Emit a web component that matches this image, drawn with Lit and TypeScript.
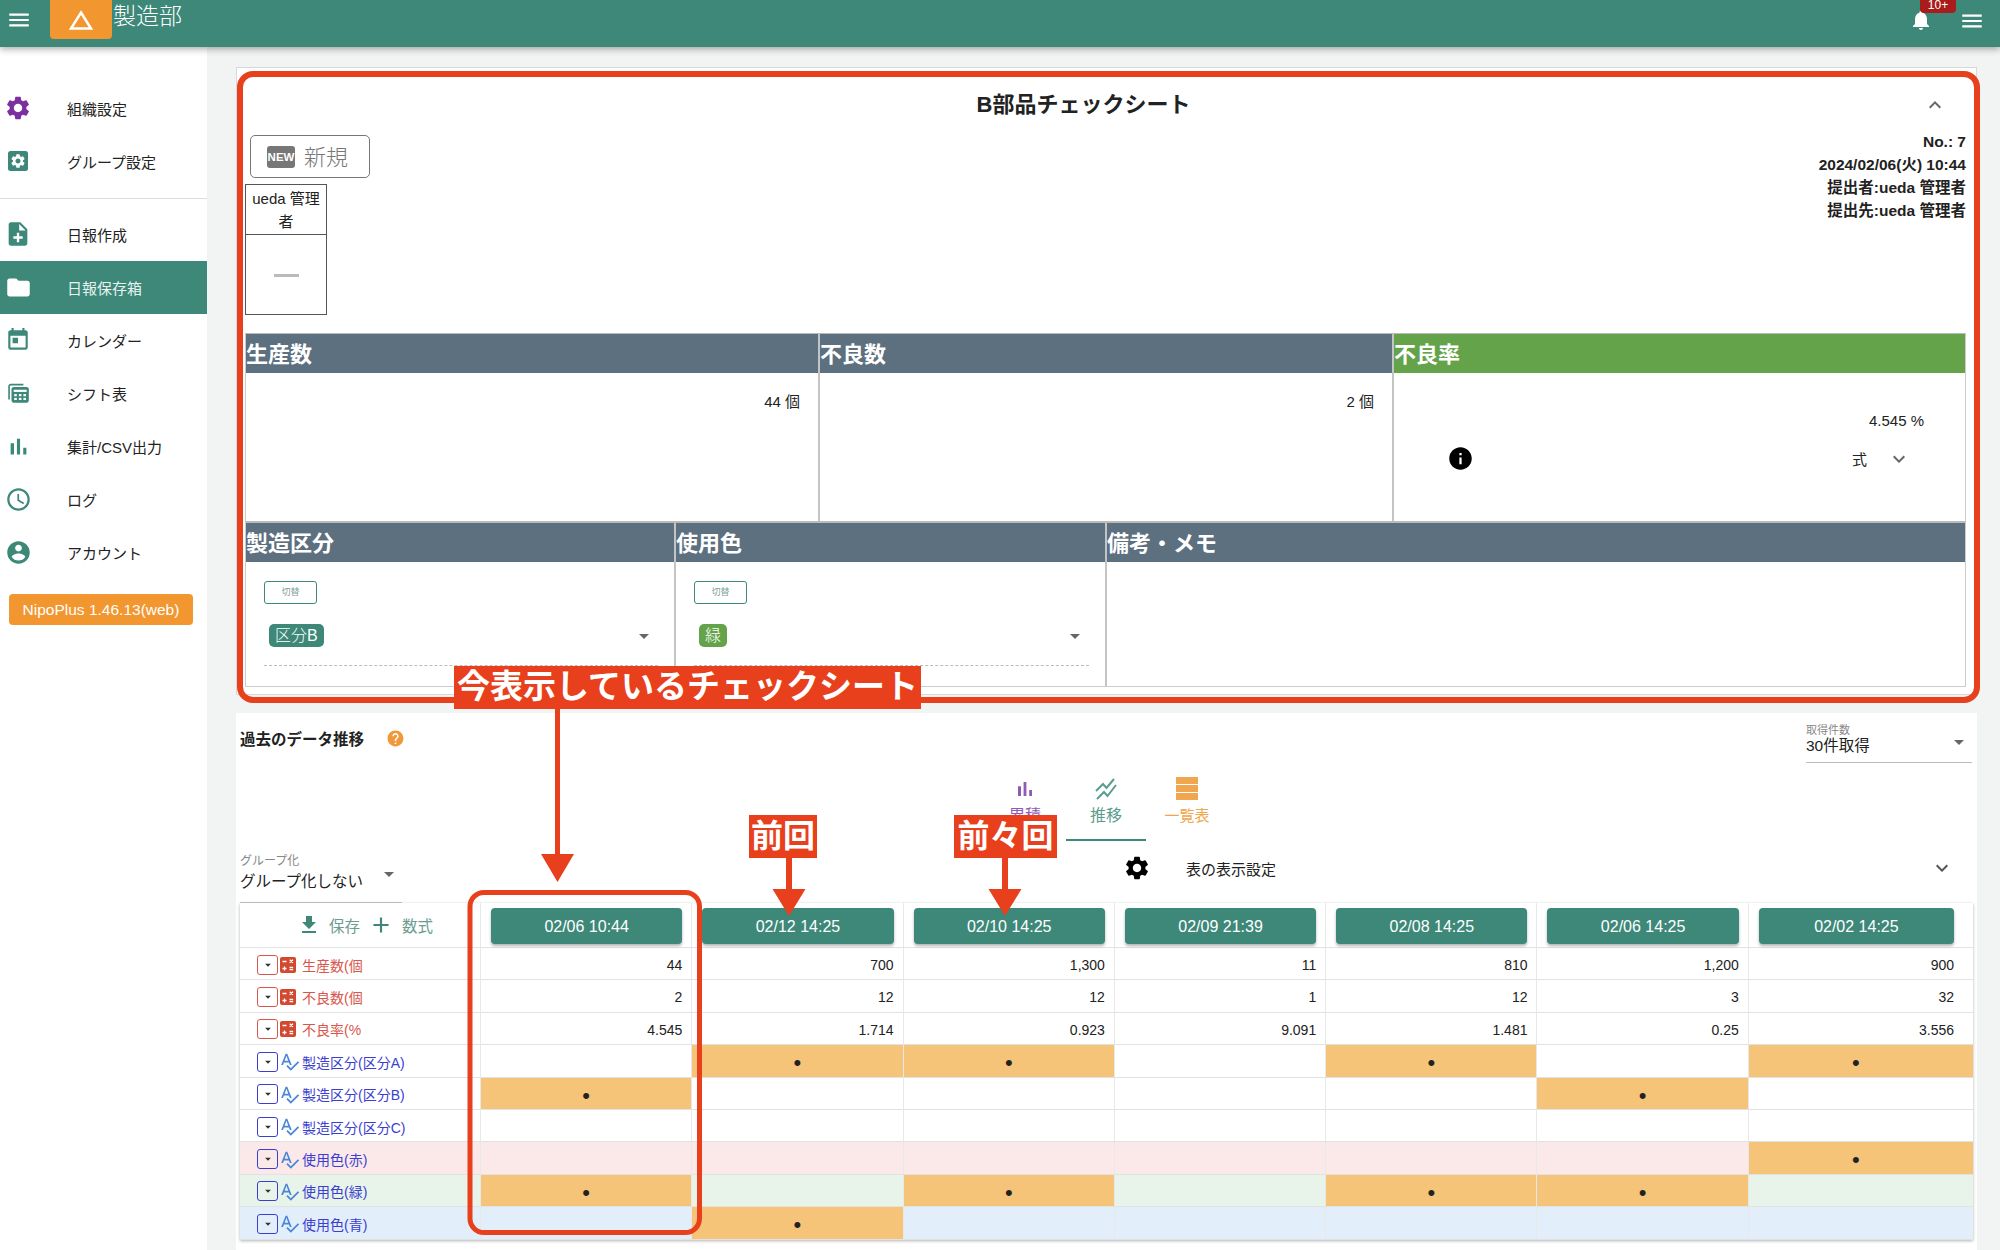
import { LitElement, html, css, svg } from 'lit';
import { customElement } from 'lit/decorators.js';
import { classMap } from 'lit/directives/class-map.js';

const P = {
  cog: 'M19.14 12.94c.04-.3.06-.61.06-.94 0-.32-.02-.64-.07-.94l2.03-1.58c.18-.14.23-.41.12-.61l-1.92-3.32c-.12-.22-.37-.29-.59-.22l-2.39.96c-.5-.38-1.03-.7-1.62-.94l-.36-2.54c-.04-.24-.24-.41-.48-.41h-3.84c-.24 0-.43.17-.47.41l-.36 2.54c-.59.24-1.13.57-1.62.94l-2.39-.96c-.22-.08-.47 0-.59.22L2.74 8.87c-.12.21-.08.47.12.61l2.03 1.58c-.05.3-.09.63-.09.94s.02.64.07.94l-2.03 1.58c-.18.14-.23.41-.12.61l1.92 3.32c.12.22.37.29.59.22l2.39-.96c.5.38 1.03.7 1.62.94l.36 2.54c.05.24.24.41.48.41h3.84c.24 0 .44-.17.47-.41l.36-2.54c.59-.24 1.13-.56 1.62-.94l2.39.96c.22.08.47 0 .59-.22l1.92-3.32c.12-.22.07-.47-.12-.61l-2.01-1.58zM12 15.6c-1.98 0-3.6-1.62-3.6-3.6s1.62-3.6 3.6-3.6 3.6 1.62 3.6 3.6-1.62 3.6-3.6 3.6z',
  noteAdd: 'M14 2H6c-1.1 0-2 .9-2 2v16c0 1.1.89 2 1.99 2H18c1.1 0 2-.9 2-2V8l-6-6zm2 14h-3v3h-2v-3H8v-2h3v-3h2v3h3v2zm-3-7V3.5L18.5 9H13z',
  folder: 'M10 4H4c-1.1 0-1.99.9-1.99 2L2 18c0 1.1.9 2 2 2h16c1.1 0 2-.9 2-2V8c0-1.1-.9-2-2-2h-8l-2-2z',
  event: 'M12 10H7v5h5v-5zM16 1v2H8V1H6v2H5c-1.11 0-1.99.9-1.99 2L3 19c0 1.1.89 2 2 2h14c1.1 0 2-.9 2-2V5c0-1.1-.9-2-2-2h-1V1h-2zm3 18H5V8h14v11z',
  bars: 'M5 9.2h3V19H5zM10.6 5h2.8v14h-2.8zm5.6 8H19v6h-2.8z',
  clock: 'M11.99 2C6.47 2 2 6.48 2 12s4.47 10 9.99 10C17.52 22 22 17.52 22 12S17.52 2 11.99 2zM12 20c-4.42 0-8-3.58-8-8s3.58-8 8-8 8 3.58 8 8-3.58 8-8 8zm.5-13H11v6l5.25 3.15.75-1.23-4.5-2.67z',
  account: 'M12 2C6.48 2 2 6.48 2 12s4.48 10 10 10 10-4.48 10-10S17.52 2 12 2zm0 3c1.66 0 3 1.34 3 3s-1.34 3-3 3-3-1.34-3-3 1.34-3 3-3zm0 14.2c-2.5 0-4.71-1.28-6-3.22.03-1.99 4-3.08 6-3.08 1.99 0 5.97 1.09 6 3.08-1.29 1.94-3.5 3.22-6 3.22z',
  bell: 'M12 22c1.1 0 2-.9 2-2h-4c0 1.1.89 2 2 2zm6-6v-5c0-3.07-1.64-5.64-4.5-6.32V4c0-.83-.67-1.5-1.5-1.5s-1.5.67-1.5 1.5v.68C7.63 5.36 6 7.92 6 11v5l-2 2v1h16v-1l-2-2z',
  info: 'M12 2C6.48 2 2 6.48 2 12s4.48 10 10 10 10-4.48 10-10S17.52 2 12 2zm1 15h-2v-6h2v6zm0-8h-2V7h2v2z',
  help: 'M12 2C6.48 2 2 6.48 2 12s4.48 10 10 10 10-4.48 10-10S17.52 2 12 2zm1 17h-2v-2h2v2zm2.07-7.75l-.9.92C13.45 12.9 13 13.5 13 15h-2v-.5c0-1.1.45-2.1 1.17-2.83l1.24-1.26c.37-.36.59-.86.59-1.41 0-1.1-.9-2-2-2s-2 .9-2 2H8c0-2.21 1.79-4 4-4s4 1.79 4 4c0 .88-.36 1.68-.93 2.25z',
  download: 'M19 9h-4V3H9v6H5l7 7 7-7zM5 18v2h14v-2H5z',
  add: 'M19 13h-6v6h-2v-6H5v-2h6V5h2v6h6v2z',
  down: 'M16.59 8.59L12 13.17 7.41 8.59 6 10l6 6 6-6z',
  up: 'M12 8l-6 6 1.41 1.41L12 10.83l4.59 4.58L18 14z',
  caret: 'M7 10l5 5 5-5z',
  menu: 'M3 18h18v-2H3v2zm0-5h18v-2H3v2zm0-7v2h18V6H3z',
  spell: 'M12.45 16h2.09L9.43 3H7.57L2.46 16h2.09l1.12-3h5.64l1.14 3zm-6.02-5L8.5 5.48 10.57 11H6.43zm15.16.59l-8.09 8.09L9.83 16l-1.41 1.41 5.09 5.09L23 13l-1.41-1.41z',
  list: 'M1 0h22v7H1zM1 8h22v7H1zM1 16h22v7H1z',
};

const icon = (d: string, size = 24, color = 'currentColor') => html`
  <svg class="ico" width=${size} height=${size} viewBox="0 0 24 24" fill=${color}>
    <path d=${d}></path>
  </svg>
`;

const groupIcon = html`
  <svg class="ico" width="24" height="24" viewBox="0 0 24 24">
    <rect x="2" y="2" width="20" height="20" rx="2.5" fill="#3d8879"></rect>
    <g transform="translate(3.6 3.6) scale(.7)"><path d=${P.cog} fill="#fff"></path></g>
  </svg>
`;

const shiftIcon = html`
  <svg class="ico" width="26" height="26" viewBox="0 0 24 24" fill="#3d8879">
    <path d="M3 18V6c0-1.500 1-2.500 2.500-2.500H17V5H5.500C5 5 4.500 5.500 4.500 6v12z"></path>
    <path d="M8 6.500H20c1 0 2 1 2 2V19c0 1-1 2-2 2H8c-1 0-2-1-2-2V8.500c0-1 1-2 2-2z"></path>
    <rect x="8" y="9" width="12" height="2" fill="#fff"></rect>
    <g fill="#fff">
      <rect x="8.500" y="13" width="2.400" height="2"></rect><rect x="12.800" y="13" width="2.400" height="2"></rect><rect x="17" y="13" width="2.400" height="2"></rect>
      <rect x="8.500" y="16.500" width="2.400" height="2"></rect><rect x="12.800" y="16.500" width="2.400" height="2"></rect><rect x="17" y="16.500" width="2.400" height="2"></rect>
    </g>
  </svg>
`;

const calcIcon = html`
  <svg class="ico" width="16" height="16" viewBox="0 0 16 16">
    <rect width="16" height="16" rx="2" fill="#d2492f"></rect>
    <path d="M2.500 4.500h4M9.700 2.700l3.200 3.200M12.900 2.700l-3.200 3.200M2.500 11.500h4M4.500 9.500v4M9.500 10.500h3.600M9.500 12.700h3.600" stroke="#fff" stroke-width="1.300"></path>
  </svg>
`;

const overlay = svg`
  <rect x="240" y="74" width="1737" height="626" rx="13" fill="none" stroke="#e8401c" stroke-width="6"></rect>
  <rect x="470" y="892.500" width="229.500" height="340" rx="14" fill="none" stroke="#e8401c" stroke-width="5"></rect>
  <path fill="#e8401c" d="M555 709h5v145h14l-16.500 28-16.500-28h14z"></path>
  <path fill="#e8401c" d="M786 858h6v31h13.500l-16.500 27-16.500-27h13.500z"></path>
  <path fill="#e8401c" d="M1002 858h6v31h13.500l-16.500 27-16.500-27h13.500z"></path>
`;

const NAV_TOP = [
  { icon: icon(P.cog, 28, '#7b2fa0'), label: '組織設定' },
  { icon: groupIcon, label: 'グループ設定' },
];

const NAV_BOTTOM = [
  { icon: icon(P.noteAdd, 28, '#3d8879'), label: '日報作成' },
  { icon: icon(P.folder, 27, '#fff'), label: '日報保存箱', active: true },
  { icon: icon(P.event, 26, '#3d8879'), label: 'カレンダー' },
  { icon: shiftIcon, label: 'シフト表' },
  { icon: icon(P.bars, 27, '#3d8879'), label: '集計/CSV出力' },
  { icon: icon(P.clock, 27, '#3d8879'), label: 'ログ' },
  { icon: icon(P.account, 27, '#3d8879'), label: 'アカウント' },
];

const DATES = ['02/06 10:44', '02/12 14:25', '02/10 14:25', '02/09 21:39', '02/08 14:25', '02/06 14:25', '02/02 14:25'];

type Row = { label: string; kind: 'calc' | 'text'; bg?: string; values?: string[]; marks?: number[] };

const ROWS: Row[] = [
  { label: '生産数(個', kind: 'calc', values: ['44', '700', '1,300', '11', '810', '1,200', '900'] },
  { label: '不良数(個', kind: 'calc', values: ['2', '12', '12', '1', '12', '3', '32'] },
  { label: '不良率(%', kind: 'calc', values: ['4.545', '1.714', '0.923', '9.091', '1.481', '0.25', '3.556'] },
  { label: '製造区分(区分A)', kind: 'text', marks: [1, 2, 4, 6] },
  { label: '製造区分(区分B)', kind: 'text', marks: [0, 5] },
  { label: '製造区分(区分C)', kind: 'text', marks: [] },
  { label: '使用色(赤)', kind: 'text', bg: 'red', marks: [6] },
  { label: '使用色(緑)', kind: 'text', bg: 'green', marks: [0, 2, 4, 5] },
  { label: '使用色(青)', kind: 'text', bg: 'blue', marks: [1] },
];

@customElement('app-root')
export class AppRoot extends LitElement {
  static styles = css`
    :host {
      display: block;
      position: relative;
      width: 2000px;
      height: 1250px;
      overflow: hidden;
      background: #f2f3f3;
      color: #222;
      font-family: "Liberation Sans", "Noto Sans CJK JP", sans-serif;
      font-size: 15px;
    }

    .ico {
      display: block;
      flex: none;
    }

    .topbar {
      position: relative;
      z-index: 2;
      display: flex;
      align-items: flex-start;
      height: 47px;
      background: #3d8879;
      color: #fff;
      box-shadow: 0 2px 7px rgba(0, 0, 0, 0.35);
    }

    .menu-left {
      margin: 7px 0 0 6px;
    }

    .logo {
      display: flex;
      align-items: center;
      justify-content: center;
      width: 62px;
      height: 39px;
      margin-left: 18px;
      background: #f29630;
      border-radius: 0 0 4px 4px;
    }

    .brand {
      margin-left: 1px;
      font-size: 23px;
      line-height: 32px;
      font-weight: 300;
    }

    .bell {
      position: relative;
      margin: 8px 0 0 auto;
    }

    .badge {
      position: absolute;
      left: 11px;
      top: -8px;
      width: 36px;
      height: 13px;
      border-radius: 0 0 4px 4px;
      background: #a81c1c;
      font-size: 12px;
      line-height: 10px;
      text-align: center;
    }

    .menu-right {
      margin: 8px 15px 0 26px;
    }

    .layout {
      display: flex;
      height: 1203px;
    }

    nav {
      flex: none;
      width: 207px;
      padding-top: 34.5px;
      box-sizing: border-box;
      background: #fff;
    }

    .nav-item {
      display: flex;
      align-items: center;
      gap: 37px;
      height: 53px;
      padding-left: 6px;
    }

    .nav-item.active {
      background: #3d8879;
      color: #e8f3f0;
    }

    .nav-icon {
      display: flex;
      align-items: center;
      justify-content: center;
      width: 24px;
      height: 24px;
    }

    .nav-sep {
      height: 1px;
      margin: 10px 0 9px;
      background: #ddd;
    }

    .version {
      width: 184px;
      height: 31px;
      margin: 15px 0 0 9px;
      border-radius: 4px;
      background: #f29630;
      color: #fff;
      font-size: 15.500px;
      line-height: 31px;
      text-align: center;
    }

    main {
      flex: 1;
      min-width: 0;
      padding: 20px 23px 0 29px;
    }

    .report {
      height: 628px;
      box-sizing: border-box;
      padding: 0 10px 0 8px;
      background: #fff;
      border: 1px solid #d8d8d8;
    }

    .report-head {
      position: relative;
      height: 62px;
      padding: 23px 44px 0 0;
      box-sizing: border-box;
      text-align: center;
      font-size: 22px;
      font-weight: 700;
      line-height: 28px;
    }

    .report-head .ico {
      position: absolute;
      right: 19px;
      top: 25px;
      color: #666;
    }

    .report-top {
      display: flex;
      justify-content: space-between;
    }

    .new-btn {
      display: flex;
      align-items: center;
      gap: 9px;
      width: 120px;
      height: 43px;
      margin: 5px 0 6px 5px;
      padding: 0 0 3px 16px;
      box-sizing: border-box;
      border: 1px solid #777;
      border-radius: 5px;
      color: #777;
      font-size: 22px;
      font-weight: 300;
    }

    .new-tag {
      width: 28px;
      height: 22px;
      margin-top: 3px;
      border-radius: 3px;
      background: #777;
      color: #fff;
      font-size: 11.500px;
      font-weight: 700;
      line-height: 22px;
      text-align: center;
    }

    .stamp {
      width: 82px;
      height: 131px;
      box-sizing: border-box;
      border: 1px solid #555;
    }

    .stamp-name {
      height: 50px;
      box-sizing: border-box;
      border-bottom: 1px solid #555;
      padding: 2px 2px 0;
      font-size: 15px;
      line-height: 23px;
      text-align: center;
    }

    .stamp-dash {
      width: 25px;
      height: 3px;
      margin: 39px auto 0;
      background: #bbb;
    }

    .meta {
      font-size: 15.500px;
      font-weight: 700;
      line-height: 23px;
      text-align: right;
    }

    .fields {
      display: grid;
      margin-top: 18px;
      border-top: 1px solid #bbb;
      border-left: 1px solid #ccc;
      border-right: 1px solid #ccc;
    }

    .fields.first {
      grid-template-columns: 572px 574px 1fr;
      height: 187px;
    }

    .fields.second {
      grid-template-columns: 428px 431px 1fr;
      height: 163px;
      margin-top: 0;
      border-top-width: 2px;
      border-bottom: 1px solid #ccc;
    }

    .field + .field {
      border-left: 2px solid #c4c4c4;
    }

    .field h3 {
      height: 39px;
      margin: 0;
      background: #5c7080;
      color: #fff;
      font-size: 22px;
      font-weight: 700;
      line-height: 41px;
    }

    .field h3.ok {
      background: #65a34b;
    }

    .amount {
      padding: 20px 18px 0 0;
      line-height: 18px;
      text-align: right;
    }

    .amount.rate {
      padding: 39px 41px 0 0;
    }

    .formula {
      display: flex;
      align-items: center;
      margin-top: 15px;
      padding: 0 54px 0 53px;
    }

    .formula .siki {
      margin-left: auto;
      margin-right: 20px;
    }

    .formula .chev {
      color: #666;
    }

    .switch {
      width: 53px;
      height: 23px;
      margin: 19px 0 10px 18px;
      border: 1px solid #3d8879;
      border-radius: 3px;
      box-sizing: border-box;
      color: #7f9f98;
      font-size: 9px;
      line-height: 21px;
      text-align: center;
    }

    .choice {
      display: flex;
      align-items: flex-start;
      justify-content: space-between;
      height: 52px;
      box-sizing: border-box;
      margin: 0 16px 0 18px;
      padding: 10px 2px 0 5px;
      border-bottom: 1px dashed #bbb;
    }

    .chip {
      height: 23px;
      padding: 0 6px;
      border-radius: 5px;
      color: #fff;
      font-size: 16px;
      font-weight: 300;
      line-height: 23px;
      background: #3d8879;
    }

    .chip.green {
      background: #65a34b;
    }

    .caret {
      color: #666;
    }

    .history {
      height: 537px;
      margin-top: 18px;
      background: #fff;
      box-sizing: border-box;
    }

    .hist-top {
      display: flex;
      justify-content: space-between;
      padding: 9px 5px 0 4px;
    }

    .hist-title {
      display: flex;
      align-items: center;
      gap: 22px;
      height: 20px;
      margin-top: 6px;
      font-size: 15.500px;
      font-weight: 700;
    }

    .select {
      position: relative;
      box-sizing: border-box;
      border-bottom: 1px solid #bbb;
    }

    .select small {
      display: block;
      color: #888;
      font-size: 11px;
      line-height: 16px;
    }

    .select span {
      display: block;
      font-size: 15.500px;
      line-height: 20px;
    }

    .select .ico {
      position: absolute;
      color: #666;
    }

    .select.count {
      width: 166px;
      height: 41px;
    }

    .select.count span {
      margin-top: -2px;
    }

    .select.count .ico {
      right: 1px;
      top: 8px;
    }

    .select.group {
      flex: none;
      width: 162px;
      height: 62px;
      padding-top: 12px;
    }

    .select.group small {
      font-size: 12px;
    }

    .select.group span {
      margin-top: 3px;
    }

    .select.group .ico {
      right: 1px;
      top: 21px;
    }

    .tabs {
      display: flex;
      justify-content: center;
      margin-top: 12px;
    }

    .tab {
      display: flex;
      flex-direction: column;
      align-items: center;
      width: 80px;
      margin-right: 1px;
      padding-bottom: 13px;
      border-bottom: 2px solid transparent;
      font-size: 16px;
      line-height: 20px;
    }

    .tab .ico {
      margin: 2px 0 5px;
    }

    .tab.sum {
      color: #8e5bb5;
    }

    .tab.trend {
      color: #5c9c8e;
      border-bottom-color: #3d8879;
    }

    .tab.list {
      color: #f0a64e;
      font-size: 15px;
    }

    .table-opts {
      display: flex;
      align-items: center;
      padding-left: 4px;
    }

    .opts-gear {
      margin: 0 35px 0 721px;
      padding-bottom: 8px;
    }

    .opts-label {
      padding-bottom: 8px;
    }

    .opts-chev {
      margin: 0 23px 0 auto;
      padding-bottom: 8px;
      color: #555;
    }

    .sheet {
      display: grid;
      grid-template-columns: 240px repeat(6, 211.300px) 1fr;
      grid-template-rows: 45px repeat(9, 32.400px);
      width: 1733px;
      margin-left: 4px;
      box-shadow: 0 1px 3px rgba(0, 0, 0, 0.3);
    }

    .cell {
      box-sizing: border-box;
      border-bottom: 1px solid #e2e2e2;
      border-left: 1px solid #e8e8e8;
      padding: 0 9px 0 0;
      font-size: 14px;
      line-height: 34px;
      text-align: right;
    }

    .cell.last {
      padding-right: 19px;
    }

    .cell.red {
      background: #fbe9ea;
    }

    .cell.green {
      background: #e8f3ea;
    }

    .cell.blue {
      background: #e3eefb;
    }

    .cell.hit {
      background: #f5c478;
      font-size: 22px;
      line-height: 36px;
      text-align: center;
      padding-right: 0;
    }

    .cell.hit.last {
      padding-right: 10px;
    }

    .cell.head {
      padding: 5px 9px 0 10px;
    }

    .cell.head.last {
      padding-right: 19px;
    }

    .date {
      height: 36px;
      border-radius: 4px;
      background: #3d8879;
      color: #fff;
      font-size: 16px;
      line-height: 37px;
      text-align: center;
      box-shadow: 0 2px 3px rgba(0, 0, 0, 0.3);
    }

    .tools {
      display: flex;
      align-items: center;
      height: 45px;
      box-sizing: border-box;
      padding-left: 57px;
      border-bottom: 1px solid #e2e2e2;
      color: #6d9c92;
      font-size: 15.500px;
    }

    .tools .ico {
      color: #3d8879;
    }

    .tools .save {
      margin: 0 8px 0 8px;
    }

    .tools .expr {
      margin-left: 8px;
    }

    .name {
      display: flex;
      align-items: center;
      box-sizing: border-box;
      padding: 2px 0 0 17px;
      border-bottom: 1px solid #e2e2e2;
      color: #3b3fd0;
      font-size: 14px;
    }

    .name.calc {
      color: #d8564c;
    }

    .name.red {
      background: #fbe9ea;
    }

    .name.green {
      background: #e8f3ea;
    }

    .name.blue {
      background: #e3eefb;
    }

    .drop {
      display: flex;
      align-items: center;
      justify-content: center;
      width: 21px;
      height: 20px;
      box-sizing: border-box;
      margin-right: 2px;
      border: 1px solid currentColor;
      border-radius: 3px;
    }

    .drop .ico {
      color: #333;
    }

    .kind {
      display: flex;
      align-items: center;
      width: 22px;
      flex: none;
    }

    .kind .ico.spell-ico {
      color: #4a86d8;
      margin-left: -1px;
    }

    .overlay {
      position: absolute;
      left: 0;
      top: 0;
      z-index: 3;
      pointer-events: none;
    }

    .tag {
      position: absolute;
      z-index: 4;
      background: #e8401c;
      color: #fff;
      font-weight: 700;
      text-align: center;
      white-space: nowrap;
    }

    .tag.now {
      left: 454px;
      top: 666px;
      width: 467px;
      height: 43px;
      font-size: 33px;
      line-height: 42px;
    }

    .tag.prev {
      left: 749px;
      top: 815px;
      width: 68px;
      height: 43px;
      font-size: 32px;
      line-height: 42px;
    }

    .tag.prev2 {
      left: 954px;
      top: 815px;
      width: 103px;
      height: 43px;
      font-size: 32px;
      line-height: 42px;
    }
  `;

  private renderNav(item: { icon: unknown; label: string; active?: boolean }) {
    return html`
      <div class=${classMap({ 'nav-item': true, active: !!item.active })}>
        <span class="nav-icon">${item.icon}</span><span>${item.label}</span>
      </div>
    `;
  }

  private renderRow(row: Row) {
    const tint = row.bg ?? '';
    return html`
      <div class="name ${row.kind === 'calc' ? 'calc' : ''} ${tint}">
        <span class="drop">${icon(P.caret, 14)}</span>
        <span class="kind">
          ${row.kind === 'calc'
            ? calcIcon
            : html`<svg class="ico spell-ico" width="21" height="21" viewBox="0 0 24 24" fill="currentColor"><path d=${P.spell}></path></svg>`}
        </span>
        <span>${row.label}</span>
      </div>
      ${DATES.map((_, i) => {
        const hit = row.marks?.includes(i);
        return html`
          <div class="cell ${tint} ${i === 6 ? 'last' : ''} ${hit ? 'hit' : ''}">
            ${hit ? '•' : row.values?.[i] ?? ''}
          </div>
        `;
      })}
    `;
  }

  render() {
    return html`
      <header class="topbar">
        <div class="menu-left">${icon(P.menu, 26, '#fff')}</div>
        <div class="logo">
          <svg width="26" height="24" viewBox="0 0 26 24" fill="none" stroke="#fff" stroke-width="2.500">
            <path d="M13 4.500L23 20.500H3z"></path>
          </svg>
        </div>
        <div class="brand">製造部</div>
        <div class="bell">
          ${icon(P.bell, 24, '#fff')}
          <div class="badge">10+</div>
        </div>
        <div class="menu-right">${icon(P.menu, 26, '#fff')}</div>
      </header>

      <div class="layout">
        <nav>
          ${NAV_TOP.map((n) => this.renderNav(n))}
          <div class="nav-sep"></div>
          ${NAV_BOTTOM.map((n) => this.renderNav(n))}
          <div class="version">NipoPlus 1.46.13(web)</div>
        </nav>

        <main>
          <section class="report">
            <div class="report-head">B部品チェックシート${icon(P.up)}</div>
            <div class="report-top">
              <div>
                <div class="new-btn"><span class="new-tag">NEW</span>新規</div>
                <div class="stamp">
                  <div class="stamp-name">ueda 管理者</div>
                  <div class="stamp-dash"></div>
                </div>
              </div>
              <div class="meta">
                <div>No.: 7</div>
                <div>2024/02/06(火) 10:44</div>
                <div>提出者:ueda 管理者</div>
                <div>提出先:ueda 管理者</div>
              </div>
            </div>

            <div class="fields first">
              <div class="field">
                <h3>生産数</h3>
                <div class="amount">44 個</div>
              </div>
              <div class="field">
                <h3>不良数</h3>
                <div class="amount">2 個</div>
              </div>
              <div class="field">
                <h3 class="ok">不良率</h3>
                <div class="amount rate">4.545 %</div>
                <div class="formula">
                  ${icon(P.info, 27, '#000')}
                  <span class="siki">式</span>
                  <span class="chev">${icon(P.down)}</span>
                </div>
              </div>
            </div>

            <div class="fields second">
              <div class="field">
                <h3>製造区分</h3>
                <div class="switch">切替</div>
                <div class="choice">
                  <span class="chip">区分B</span>
                  <span class="caret">${icon(P.caret)}</span>
                </div>
              </div>
              <div class="field">
                <h3>使用色</h3>
                <div class="switch">切替</div>
                <div class="choice">
                  <span class="chip green">緑</span>
                  <span class="caret">${icon(P.caret)}</span>
                </div>
              </div>
              <div class="field">
                <h3>備考・メモ</h3>
              </div>
            </div>
          </section>

          <section class="history">
            <div class="hist-top">
              <div class="hist-title">過去のデータ推移 ${icon(P.help, 19, '#f0983a')}</div>
              <div class="select count">
                <small>取得件数</small>
                <span>30件取得</span>
                ${icon(P.caret)}
              </div>
            </div>

            <div class="tabs">
              <div class="tab sum">${icon(P.bars)}累積</div>
              <div class="tab trend">
                <svg class="ico" width="24" height="24" viewBox="0 0 24 24" fill="none" stroke="currentColor" stroke-width="2">
                  <path d="M2 14l7-7 3.500 4L20 2M3 22l7-7 3.500 4L22 8"></path>
                </svg>
                推移
              </div>
              <div class="tab list">${icon(P.list)}一覧表</div>
            </div>

            <div class="table-opts">
              <div class="select group">
                <small>グループ化</small>
                <span>グループ化しない</span>
                ${icon(P.caret)}
              </div>
              <div class="opts-gear">${icon(P.cog, 28, '#000')}</div>
              <span class="opts-label">表の表示設定</span>
              <div class="opts-chev">${icon(P.down)}</div>
            </div>

            <div class="sheet">
              <div class="tools">
                ${icon(P.download)}
                <span class="save">保存</span>
                ${icon(P.add, 26)}
                <span class="expr">数式</span>
              </div>
              ${DATES.map(
                (d, i) => html`
                  <div class="cell head ${i === 6 ? 'last' : ''}"><div class="date">${d}</div></div>
                `,
              )}
              ${ROWS.map((r) => this.renderRow(r))}
            </div>
          </section>
        </main>
      </div>

      <svg class="overlay" width="2000" height="1250" viewBox="0 0 2000 1250">${overlay}</svg>
      <div class="tag now">今表示しているチェックシート</div>
      <div class="tag prev">前回</div>
      <div class="tag prev2">前々回</div>
    `;
  }
}
